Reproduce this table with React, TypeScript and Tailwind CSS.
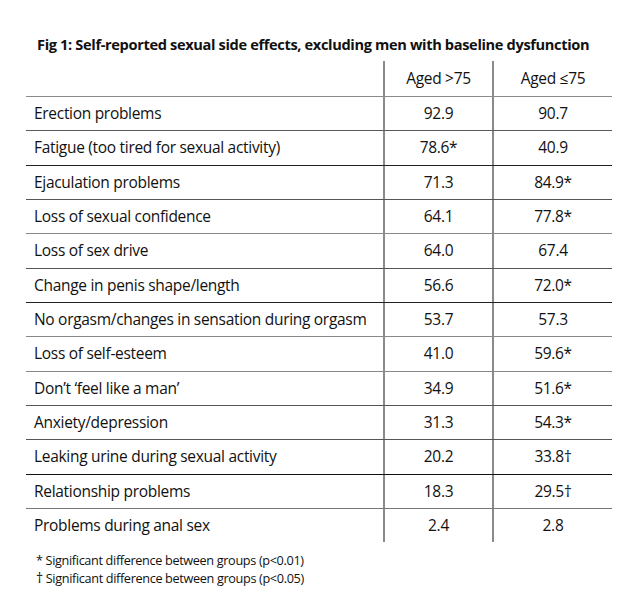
const rows: [string, string, string, string][] = [
  ["Erection problems", "92.9", "90.7", "border-[#8a8a8a]"],
  ["Fatigue (too tired for sexual activity)", "78.6*", "40.9", "border-[#5a5a5a]"],
  ["Ejaculation problems", "71.3", "84.9*", "border-[#222]"],
  ["Loss of sexual confidence", "64.1", "77.8*", "border-[#555]"],
  ["Loss of sex drive", "64.0", "67.4", "border-[#888]"],
  ["Change in penis shape/length", "56.6", "72.0*", "border-[#555]"],
  ["No orgasm/changes in sensation during orgasm", "53.7", "57.3", "border-[#222]"],
  ["Loss of self-esteem", "41.0", "59.6*", "border-[#888]"],
  ["Don’t ‘feel like a man’", "34.9", "51.6*", "border-[#888]"],
  ["Anxiety/depression", "31.3", "54.3*", "border-[#555]"],
  ["Leaking urine during sexual activity", "20.2", "33.8†", "border-[#555]"],
  ["Relationship problems", "18.3", "29.5†", "border-[#111]"],
  ["Problems during anal sex", "2.4", "2.8", "border-[#777]"],
]

export default function App() {
  return (
    <div className="w-[643px] h-[605px] bg-white text-[#111] font-['Open_Sans',sans-serif] pt-[34px]">
      <h1 className="ml-[37px] text-[14.6px] font-bold tracking-[-0.35px] leading-[20px] whitespace-nowrap">
        Fig 1: Self-reported sexual side effects, excluding men with baseline dysfunction
      </h1>
      <div className="ml-[26px] mt-[7px] w-[586px] text-[15.5px] tracking-[-0.3px]">
        <div className="flex h-[35px] items-center">
          <div className="w-[357px]" />
          <div className="w-[109px] h-full flex items-center justify-center border-l-2 border-[#8a8a8a]">Aged &gt;75</div>
          <div className="w-[120px] h-full flex items-center justify-center border-l-2 border-[#8a8a8a]">Aged ≤75</div>
        </div>
        {rows.map(([label, a, b, line]) => (
          <div key={label} className={`flex h-[34.33px] border-t ${line}`}>
            <div className="w-[357px] pl-[8px] flex items-center whitespace-nowrap">{label}</div>
            <div className="w-[109px] flex items-center justify-center border-l-2 border-[#8a8a8a]">{a}</div>
            <div className="w-[120px] flex items-center justify-center border-l-2 border-[#8a8a8a]">{b}</div>
          </div>
        ))}
      </div>
      <div className="ml-[36px] mt-[9px] text-[12.7px] tracking-[-0.35px] leading-[18px]">
        <p>* Significant difference between groups (p&lt;0.01)</p>
        <p>
          <span className="text-[14px]">†</span> Significant difference between groups (p&lt;0.05)
        </p>
      </div>
    </div>
  )
}
